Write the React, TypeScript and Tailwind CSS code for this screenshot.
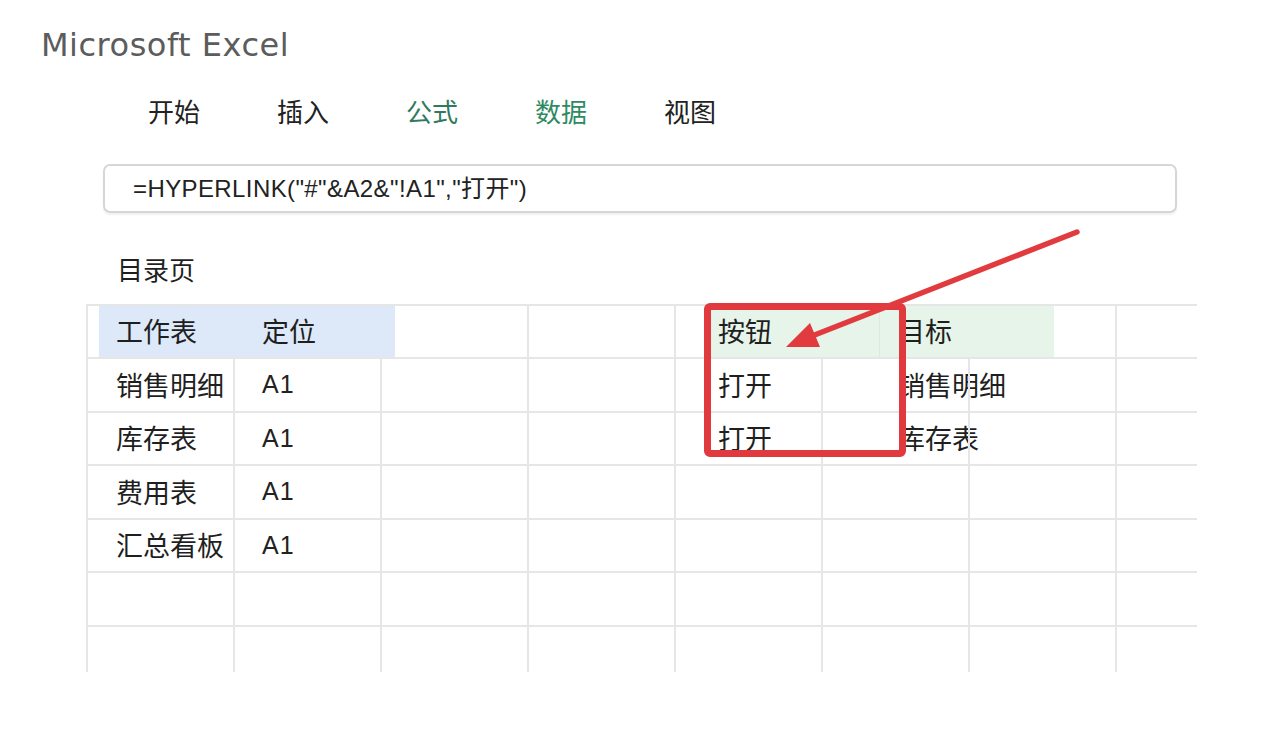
import React from 'react'

const cjk = { fontFamily: '"Noto Sans CJK SC", "Noto Sans", sans-serif' };
const latin = { fontFamily: '"Liberation Sans", "Noto Sans CJK SC", sans-serif' };

const tabs = [
    { label: '开始', color: 'text-[#222]' },
    { label: '插入', color: 'text-[#222]' },
    { label: '公式', color: 'text-[#2f7a5c]' },
    { label: '数据', color: 'text-[#2f8a62]' },
    { label: '视图', color: 'text-[#222]' },
];

// filas de la hoja: [col1, col2, col5, col6]
const rows: [string, string, string, string][] = [
    ['销售明细', 'A1', '打开', '销售明细'],
    ['库存表', 'A1', '打开', '库存表'],
    ['费用表', 'A1', '', ''],
    ['汇总看板', 'A1', '', ''],
    ['', '', '', ''],
    ['', '', '', ''],
];
const rowHeights = ['h-[54px]', 'h-[53px]', 'h-[54px]', 'h-[53px]', 'h-[54px]', 'h-[47px]'];

const Cell = ({ children, className = '' }: { children?: React.ReactNode; className?: string }) => (
    <div className={`h-full w-[147px] shrink-0 border-l-2 border-[#e6e6e6] flex items-center whitespace-nowrap ${className}`}>
        {children}
    </div>
);

const App = () => {
    return (
        <div className="relative w-[1288px] h-[736px] bg-white overflow-hidden text-[#1f1f1f]">
            {/* Titulo */}
            <div className="pt-[25px] pl-[41px] text-[32px] leading-[40px] tracking-[0.5px] text-[#5c5c5c]" style={{ fontFamily: '"DejaVu Sans", sans-serif' }}>
                Microsoft Excel
            </div>

            {/* Pestañas */}
            <div className="mt-[30px] pl-[148px] flex text-[26px] leading-[32px]" style={cjk}>
                {tabs.map(t => (
                    <div key={t.label} className={`w-[129px] ${t.color}`}>{t.label}</div>
                ))}
            </div>

            {/* Barra de fórmulas */}
            <div className="mt-[37px] ml-[103px] w-[1074px] h-[49px] border-2 border-[#d6d6d6] rounded-[7px] shadow-[0_2px_2px_rgba(0,0,0,0.06)] flex items-center pl-[28px] text-[24px] tracking-[0.4px] text-[#222]" style={latin}>
                =HYPERLINK("#"&amp;A2&amp;"!A1","打开")
            </div>

            <div className="mt-[39px] ml-[117px] text-[26px] leading-[34px]" style={cjk}>目录页</div>

            {/* Hoja */}
            <div className="mt-[18px] ml-[86px] w-[1111px] text-[27px]" style={cjk}>
                {/* cabecera */}
                <div className="h-[53px] flex border-t-2 border-[#e6e6e6]">
                    <div className="h-full w-[13px] shrink-0 border-l-2 border-[#e6e6e6]" />
                    <div className="h-full w-[296px] shrink-0 bg-[#dde9f8] flex items-center">
                        <span className="w-[163px] pl-[17px]">工作表</span>
                        <span>定位</span>
                    </div>
                    <div className="h-full w-[132px] shrink-0" />
                    <Cell />
                    <div className="h-full w-[34px] shrink-0 border-l-2 border-[#e6e6e6]" />
                    <div className="h-full w-[346px] shrink-0 bg-[#e7f4ea] flex items-center">
                        <span className="w-[172px] pl-[10px] h-full flex items-center border-r border-[#d8ebdd]">按钮</span>
                        <span className="pl-[18px]">目标</span>
                    </div>
                    <div className="h-full w-[61px] shrink-0" />
                    <div className="h-full w-[82px] shrink-0 border-l-2 border-[#e6e6e6]" />
                </div>

                {rows.map((r, i) => (
                    <div key={i} className={`${rowHeights[i]} flex border-t-2 border-[#e6e6e6]`}>
                        <Cell className="pl-[28px]">{r[0]}</Cell>
                        <Cell className="pl-[27px]"><span style={latin} className="text-[25px] tracking-[1px] text-[#222]">{r[1]}</span></Cell>
                        <Cell />
                        <Cell />
                        <Cell className="pl-[42px]">{r[2]}</Cell>
                        <Cell className="pl-[75px] overflow-visible">{r[3]}</Cell>
                        <Cell />
                        <div className="h-full w-[82px] shrink-0 border-l-2 border-[#e6e6e6]" />
                    </div>
                ))}
            </div>

            {/* Recuadro rojo */}
            <div className="absolute left-[704px] top-[303px] w-[202px] h-[154px] border-[7px] border-[#e0393e] rounded-[6px]" />

            {/* Flecha */}
            <svg className="absolute inset-0 pointer-events-none" width="1288" height="736" viewBox="0 0 1288 736">
                <line x1="1077" y1="232" x2="812" y2="336" stroke="#e23b3f" strokeWidth="5.5" strokeLinecap="round" />
                <polygon points="786,347 810,323 820,347" fill="#e23b3f" />
            </svg>
        </div>
    )
}

export default App;
